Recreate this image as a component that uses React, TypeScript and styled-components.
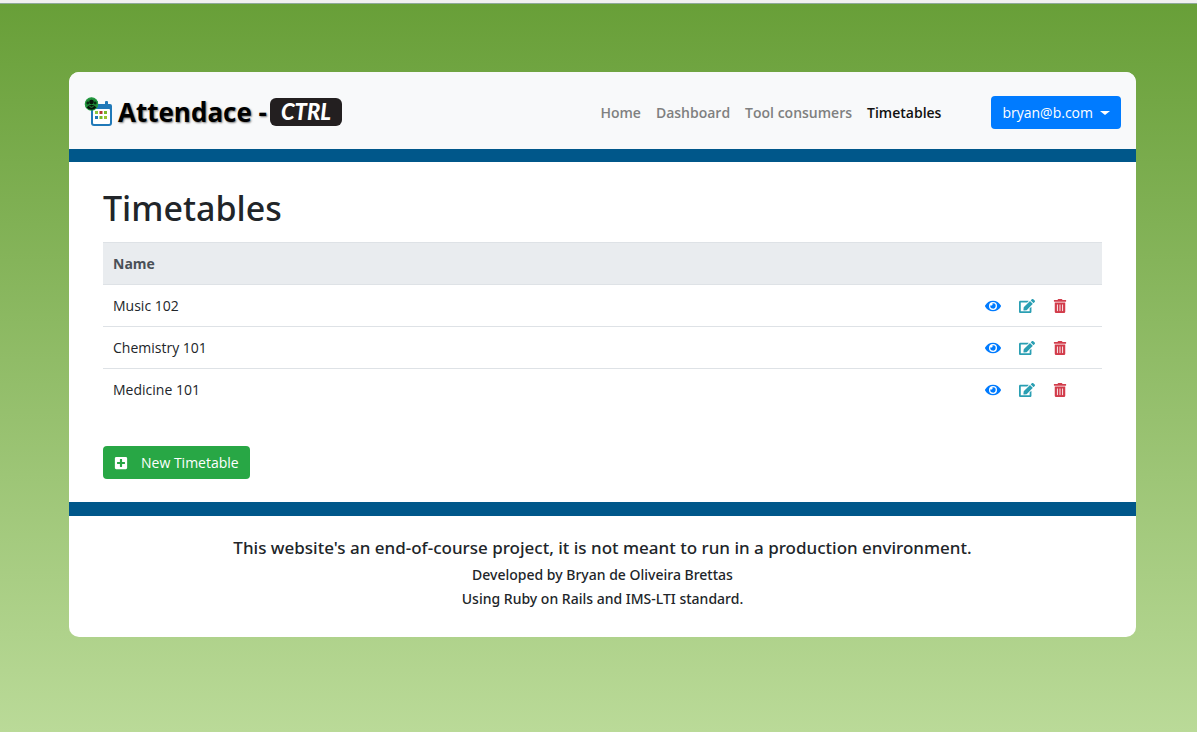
import React from "react";
import styled, { createGlobalStyle } from "styled-components";
import { FaEdit, FaEye, FaPlusSquare, FaTrashAlt } from "react-icons/fa";

const GlobalStyle = createGlobalStyle`
  *, *::before, *::after { box-sizing: border-box; }
  body {
    margin: 0;
    font-family: "Open Sans", "Noto Sans", sans-serif;
    font-size: 14px;
    line-height: 21px;
    color: #212529;
  }
`;

const Page = styled.div`
  min-height: 100vh;
  padding: 68px 61px 68px 69px;
  border-top: 3px solid #f0f0f0;
  background: linear-gradient(#689f38, #bada98);
  box-shadow: inset 0 1px 0 #8fa99a;
`;

const Card = styled.div`
  margin-top: 1px;
  border-radius: 10px;
  overflow: hidden;
  background: #fff;
`;

const Header = styled.header`
  display: flex;
  align-items: center;
  justify-content: space-between;
  padding: 24px 15px 20px;
  background: #f8f9fa;
  border-bottom: 13px solid #00578a;
`;

const Brand = styled.a`
  display: flex;
  align-items: center;
  padding-bottom: 2px;
  color: #000;
  text-decoration: none;
  white-space: nowrap;
`;

const BrandName = styled.span`
  margin: 0 3px 0 6px;
  font-size: 26px;
  line-height: 28px;
  font-weight: 700;
  text-shadow: 1px 1px 2px #777;
`;

const BrandBadge = styled.span`
  width: 72px;
  border-radius: 6px;
  background: #231f20;
  color: #fff;
  font-family: Lato, "Liberation Sans", sans-serif;
  font-size: 22px;
  line-height: 28px;
  font-weight: 900;
  font-style: italic;
  text-align: center;
`;

const Navigation = styled.nav`
  display: flex;
  align-items: center;
  gap: 15px;
`;

const NavLink = styled.a<{ $active?: boolean }>`
  color: ${(p) => (p.$active ? "#111" : "#7f8080")};
  font-weight: 600;
  text-decoration: none;
`;

const Button = styled.button<{ $tone: string }>`
  display: inline-flex;
  align-items: center;
  height: 33px;
  padding: 0 11px;
  border: 0;
  border-radius: 4px;
  background: ${(p) => p.$tone};
  color: #fff;
  font: inherit;
  white-space: nowrap;
  cursor: pointer;
`;

const AccountButton = styled(Button)`
  margin-left: 35px;
  gap: 7px;
  &::after {
    content: "";
    border: 5px solid transparent;
    border-top: 4px solid #fff;
    border-bottom: 0;
  }
`;

const CreateButton = styled(Button)`
  gap: 13px;
`;

const Main = styled.main`
  padding: 24px 34px 23px;
`;

const Title = styled.h1`
  margin: 0 0 12px;
  font-family: "Noto Sans", "Open Sans", sans-serif;
  font-size: 34px;
  line-height: 44px;
  font-weight: 500;
`;

const Table = styled.table`
  width: 100%;
  margin-bottom: 36px;
  border-collapse: separate;
  border-spacing: 0;
`;

const HeadCell = styled.th`
  height: 43px;
  padding: 0 10px;
  border-top: 1px solid #dee2e6;
  border-bottom: 1px solid #dee2e6;
  background: #e9ecef;
  color: #495057;
  text-align: left;
`;

const Cell = styled.td`
  height: 41px;
  padding: 0 10px;
`;

const Row = styled.tr`
  & + & ${Cell} {
    height: 42px;
    border-top: 1px solid #dee2e6;
  }
`;

const Actions = styled.div`
  display: flex;
  align-items: center;
  justify-content: flex-end;
  gap: 18px;
  padding-right: 25px;
`;

const ActionLink = styled.a<{ $tone: string; $size: number }>`
  display: flex;
  color: ${(p) => p.$tone};
  svg {
    height: ${(p) => p.$size}px;
    width: auto;
  }
`;

const Footer = styled.footer`
  padding: 20px 15px 26px;
  border-top: 14px solid #00578a;
  font-family: "Noto Sans", "Open Sans", sans-serif;
  font-weight: 500;
  text-align: center;
`;

const FooterLead = styled.p`
  margin: 0 0 3px;
  font-size: 17px;
  line-height: 24px;
`;

const FooterLine = styled.p`
  margin: 0;
  line-height: 24px;
`;

function Logo() {
  return (
    <svg width="28" height="30" viewBox="0 0 28 30" aria-hidden="true">
      <path d="M9 7h17q2 0 2 2v17q0 3-3 3H10q-3 0-3-3V9z" fill="#2079b8" />
      <rect x="11" y="4" width="3" height="6" rx="1" fill="#2079b8" />
      <rect x="21" y="4" width="3" height="6" rx="1" fill="#2079b8" />
      <rect x="9" y="12" width="17" height="15" rx="1" fill="#fff" />
      <rect x="11" y="14" width="3" height="3" fill="#8cc63f" />
      <rect x="15.5" y="14" width="3" height="3" fill="#b5392f" />
      <rect x="20" y="14" width="3" height="3" fill="#79b928" />
      <rect x="11" y="19" width="3" height="3" fill="#2079b8" />
      <rect x="15.5" y="19" width="3" height="3" fill="#79b928" />
      <rect x="20" y="19" width="3" height="3" fill="#9cc32e" />
      <circle cx="7.5" cy="7" r="6.2" fill="#1f8a38" stroke="#249a40" strokeWidth="1.2" />
      <circle cx="7.5" cy="5" r="2.3" fill="#07140a" />
      <circle cx="3.8" cy="6" r="1.4" fill="#0b2b13" />
      <circle cx="11.2" cy="6" r="1.4" fill="#0b2b13" />
      <path d="M2.5 10.5q5-5.5 10 0q-5 4.5-10 0" fill="#07140a" />
      <path d="M5.5 9.5q2 1.5 4 0" stroke="#2fae4b" strokeWidth="0.8" fill="none" />
    </svg>
  );
}

const links = ["Home", "Dashboard", "Tool consumers", "Timetables"];
const timetables = ["Music 102", "Chemistry 101", "Medicine 101"];

export default function App() {
  return (
    <>
      <GlobalStyle />
      <Page>
        <Card>
          <Header>
            <Brand href="#">
              <Logo />
              <BrandName>Attendace -</BrandName>
              <BrandBadge>CTRL</BrandBadge>
            </Brand>
            <Navigation>
              {links.map((label) => (
                <NavLink key={label} href="#" $active={label === "Timetables"}>
                  {label}
                </NavLink>
              ))}
              <AccountButton type="button" $tone="#007bff">bryan@b.com</AccountButton>
            </Navigation>
          </Header>
          <Main>
            <Title>Timetables</Title>
            <Table>
              <thead>
                <tr>
                  <HeadCell scope="col">Name</HeadCell>
                  <HeadCell as="td" />
                </tr>
              </thead>
              <tbody>
                {timetables.map((name) => (
                  <Row key={name}>
                    <Cell>{name}</Cell>
                    <Cell>
                      <Actions>
                        <ActionLink href="#" $tone="#007bff" $size={16} aria-label={`View ${name}`}><FaEye /></ActionLink>
                        <ActionLink href="#" $tone="#2a9fb3" $size={16} aria-label={`Edit ${name}`}><FaEdit /></ActionLink>
                        <ActionLink href="#" $tone="#d23c4b" $size={14} aria-label={`Delete ${name}`}><FaTrashAlt /></ActionLink>
                      </Actions>
                    </Cell>
                  </Row>
                ))}
              </tbody>
            </Table>
            <CreateButton type="button" $tone="#28a745">
              <FaPlusSquare size={14} />
              New Timetable
            </CreateButton>
          </Main>
          <Footer>
            <FooterLead>This website's an end-of-course project, it is not meant to run in a production environment.</FooterLead>
            <FooterLine>Developed by Bryan de Oliveira Brettas</FooterLine>
            <FooterLine>Using Ruby on Rails and IMS-LTI standard.</FooterLine>
          </Footer>
        </Card>
      </Page>
    </>
  );
}
